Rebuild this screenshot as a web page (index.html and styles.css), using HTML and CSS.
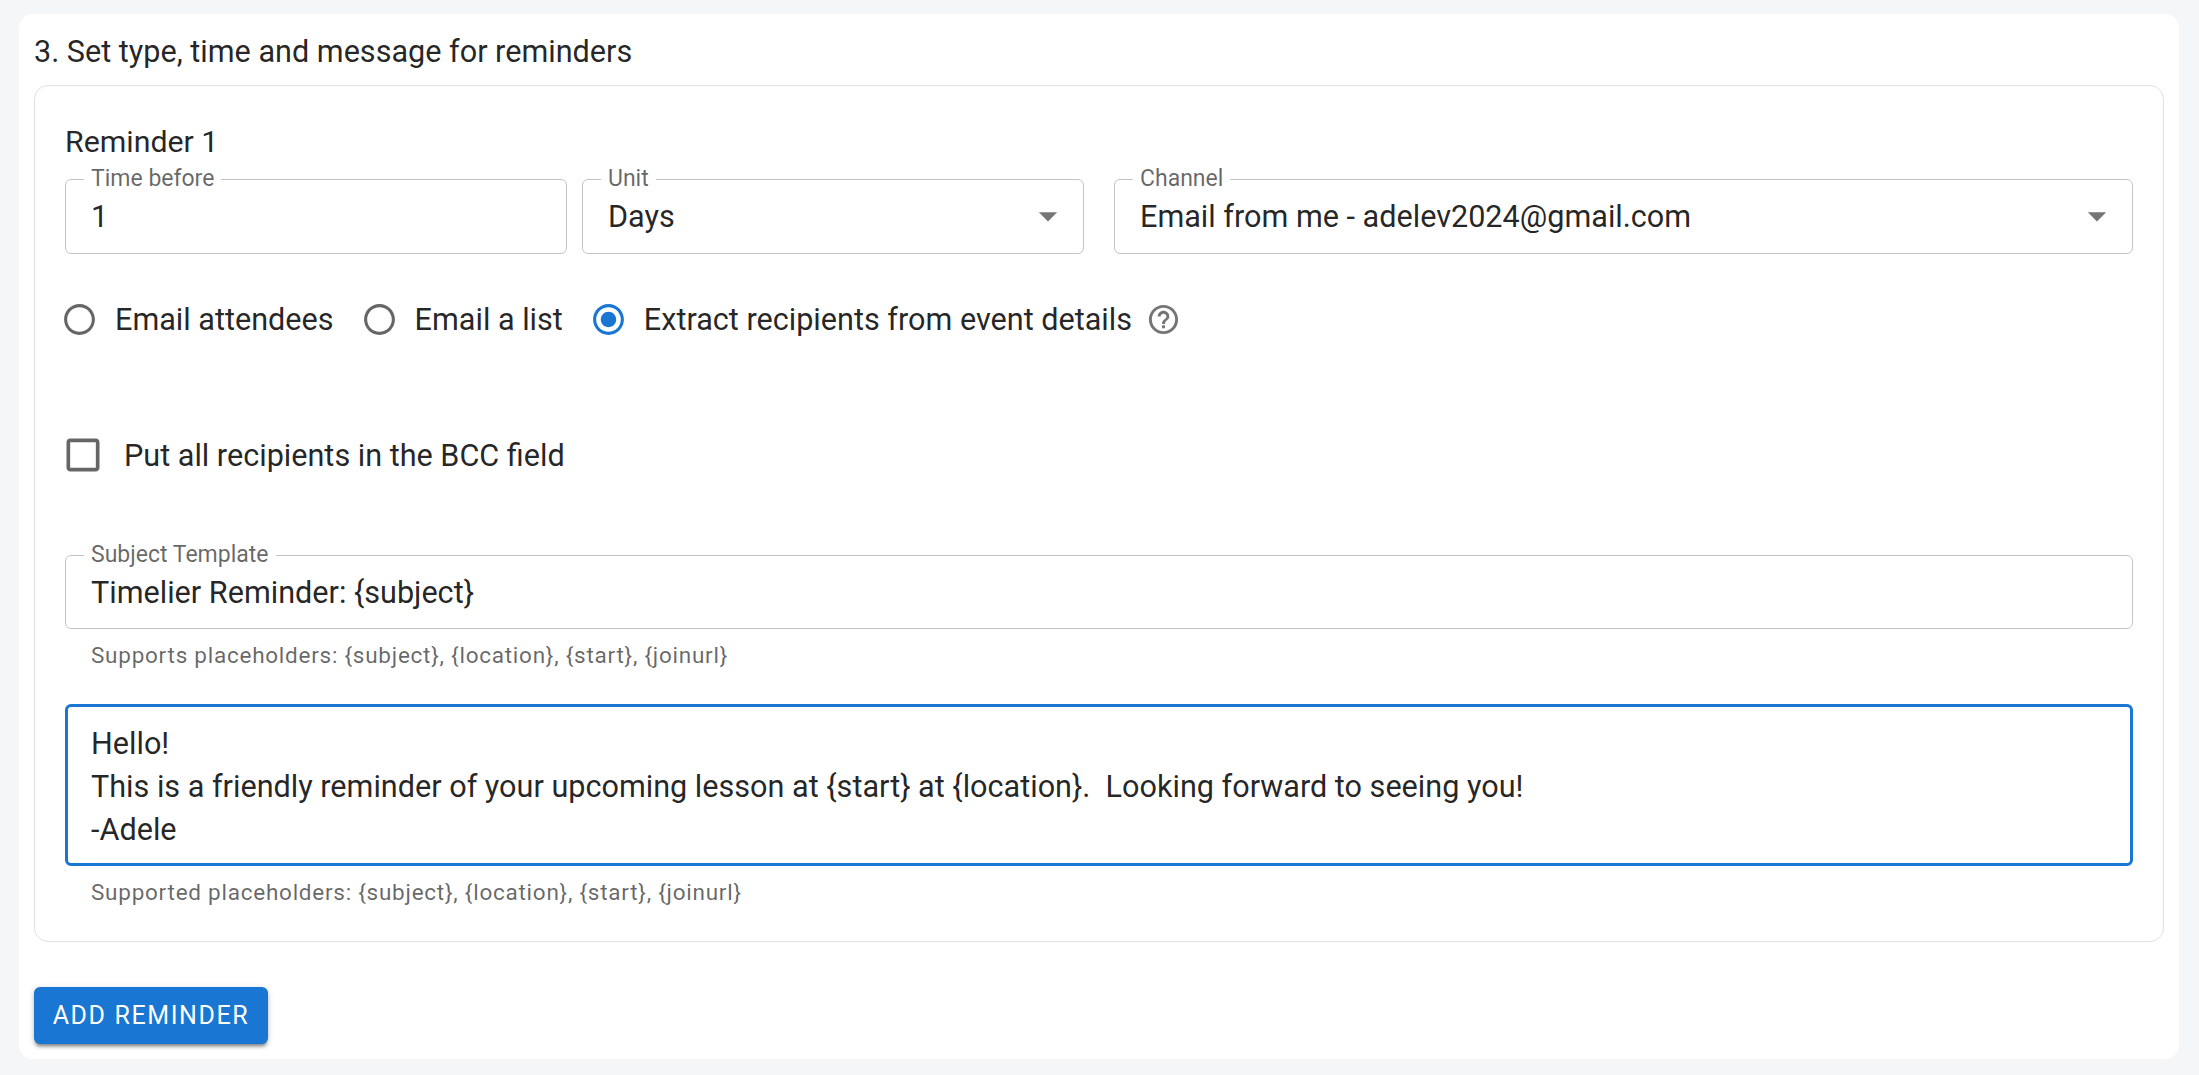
FILE: index.html
```html
<!DOCTYPE html>
<html lang="en">
<head>
    <meta charset="UTF-8">
    <meta name="viewport" content="width=device-width, initial-scale=1.0">
    <title>Reminders</title>
    <link rel="stylesheet" href="styles.css">
</head>
<body>
    <div class="panel">
        <h2 class="step-title">3. Set type, time and message for reminders</h2>

        <div class="reminder-card">
            <h3 class="reminder-title">Reminder 1</h3>

            <div class="field-row">
                <div class="field">
                    <span class="field-label">Time before</span>
                    <span class="field-value">1</span>
                </div>
                <div class="field">
                    <span class="field-label">Unit</span>
                    <span class="field-value">Days</span>
                    <svg class="caret" viewBox="0 0 24 24"><path d="M7 10l5 5 5-5z"/></svg>
                </div>
                <div class="field channel">
                    <span class="field-label">Channel</span>
                    <span class="field-value">Email from me - adelev2024@gmail.com</span>
                    <svg class="caret" viewBox="0 0 24 24"><path d="M7 10l5 5 5-5z"/></svg>
                </div>
            </div>

            <div class="radio-row">
                <div class="radio">
                    <svg class="radio-icon" viewBox="0 0 24 24"><path d="M12 2C6.48 2 2 6.48 2 12s4.48 10 10 10 10-4.48 10-10S17.52 2 12 2zm0 18c-4.42 0-8-3.58-8-8s3.58-8 8-8 8 3.58 8 8-3.58 8-8 8z"/></svg>
                    <span>Email attendees</span>
                </div>
                <div class="radio">
                    <svg class="radio-icon" viewBox="0 0 24 24"><path d="M12 2C6.48 2 2 6.48 2 12s4.48 10 10 10 10-4.48 10-10S17.52 2 12 2zm0 18c-4.42 0-8-3.58-8-8s3.58-8 8-8 8 3.58 8 8-3.58 8-8 8z"/></svg>
                    <span>Email a list</span>
                </div>
                <div class="radio">
                    <svg class="radio-icon checked" viewBox="0 0 24 24"><path d="M12 7c-2.76 0-5 2.24-5 5s2.24 5 5 5 5-2.24 5-5-2.24-5-5-5zm0-5C6.48 2 2 6.48 2 12s4.48 10 10 10 10-4.48 10-10S17.52 2 12 2zm0 18c-4.42 0-8-3.58-8-8s3.58-8 8-8 8 3.58 8 8-3.58 8-8 8z"/></svg>
                    <span>Extract recipients from event details</span>
                </div>
                <svg class="help-icon" viewBox="0 0 24 24"><path d="M11 18h2v-2h-2v2zm1-16C6.48 2 2 6.48 2 12s4.48 10 10 10 10-4.48 10-10S17.52 2 12 2zm0 18c-4.41 0-8-3.59-8-8s3.59-8 8-8 8 3.59 8 8-3.59 8-8 8zm0-14c-2.21 0-4 1.79-4 4h2c0-1.1.9-2 2-2s2 .9 2 2c0 2-3 1.75-3 5h2c0-2.25 3-2.5 3-5 0-2.21-1.79-4-4-4z"/></svg>
            </div>

            <div class="checkbox-row">
                <svg class="checkbox-icon" viewBox="0 0 24 24"><path d="M19 5v14H5V5h14m0-2H5c-1.1 0-2 .9-2 2v14c0 1.1.9 2 2 2h14c1.1 0 2-.9 2-2V5c0-1.1-.9-2-2-2z"/></svg>
                <span>Put all recipients in the BCC field</span>
            </div>

            <div class="field subject">
                <span class="field-label">Subject Template</span>
                <span class="field-value">Timelier Reminder: {subject}</span>
            </div>
            <p class="helper">Supports placeholders: {subject}, {location}, {start}, {joinurl}</p>

            <div class="message-box">
                <div>Hello!</div>
                <div>This is a friendly reminder of your upcoming lesson at {start} at {location}.&nbsp; Looking forward to seeing you!</div>
                <div>-Adele</div>
            </div>
            <p class="helper">Supported placeholders: {subject}, {location}, {start}, {joinurl}</p>
        </div>

        <button class="add-btn">Add Reminder</button>
    </div>
</body>
</html>
```

FILE: styles.css
```css
* {
    box-sizing: border-box;
}
body {
    margin: 0;
    background-color: #f5f6f8;
    font-family: Roboto, "Liberation Sans", sans-serif;
    color: rgba(0, 0, 0, 0.87);
}
.panel {
    margin: 14px 20px 16px 19px;
    padding: 18px 15px 15px;
    background-color: #fff;
    border-radius: 14px;
}
.step-title {
    margin: 0 0 13px;
    font-size: 30.6px;
    font-weight: 400;
    line-height: 40px;
}
.reminder-card {
    padding: 36px 30px 37px 30px;
    border: 1px solid #e0e0e0;
    border-radius: 14px;
}
.reminder-title {
    margin: 0 0 17px;
    font-size: 30.3px;
    font-weight: 400;
    line-height: 40px;
}
.field-row {
    display: grid;
    grid-template-columns: 502px 502px 1fr;
    column-gap: 15px;
}
.field {
    position: relative;
    display: flex;
    align-items: center;
    height: 75px;
    padding: 0 25px;
    border: 1px solid #c4c4c4;
    border-radius: 6px;
}
.channel {
    margin-left: 15px;
}
.field-label {
    position: absolute;
    top: -13px;
    left: 18px;
    padding: 0 7px;
    background-color: #fff;
    font-size: 23px;
    line-height: 24px;
    color: rgba(0, 0, 0, 0.6);
}
.field-value {
    font-size: 30.6px;
}
.caret {
    position: absolute;
    top: 14px;
    right: 13px;
    width: 44px;
    height: 44px;
    fill: #757575;
}
.radio-row {
    display: flex;
    align-items: center;
    height: 40px;
    margin-top: 45px;
    font-size: 30.6px;
}
.radio {
    display: flex;
    align-items: center;
    gap: 17px;
    margin-right: 31px;
}
.radio-icon {
    width: 37px;
    height: 37px;
    margin-left: -4px;
    fill: #666;
}
.radio-icon.checked {
    fill: #1976d2;
}
.help-icon {
    width: 35px;
    height: 35px;
    margin-left: -17px;
    fill: #757575;
}
.checkbox-row {
    display: flex;
    align-items: center;
    gap: 19px;
    height: 44px;
    margin-top: 94px;
    font-size: 30.6px;
}
.checkbox-icon {
    width: 44px;
    height: 44px;
    margin-left: -4px;
    fill: #666;
}
.subject {
    height: 74px;
    margin-top: 78px;
}
.helper {
    margin: 14px 0 0 26px;
    font-size: 22.5px;
    letter-spacing: 0.75px;
    line-height: 24px;
    color: rgba(0, 0, 0, 0.6);
}
.message-box {
    height: 162px;
    margin-top: 37px;
    padding: 15px 23px;
    border: 3px solid #1976d2;
    border-radius: 6px;
    font-size: 30.6px;
    line-height: 43px;
}
.add-btn {
    display: block;
    width: 234px;
    height: 57px;
    margin-top: 45px;
    padding: 0;
    border: none;
    border-radius: 6px;
    background-color: #1976d2;
    color: #fff;
    font-family: inherit;
    font-size: 25px;
    font-weight: 400;
    letter-spacing: 1.6px;
    text-transform: uppercase;
    box-shadow: 0 4px 3px -2px rgba(0, 0, 0, 0.3), 0 3px 4px 0 rgba(0, 0, 0, 0.18), 0 1px 7px 0 rgba(0, 0, 0, 0.12);
}
```
